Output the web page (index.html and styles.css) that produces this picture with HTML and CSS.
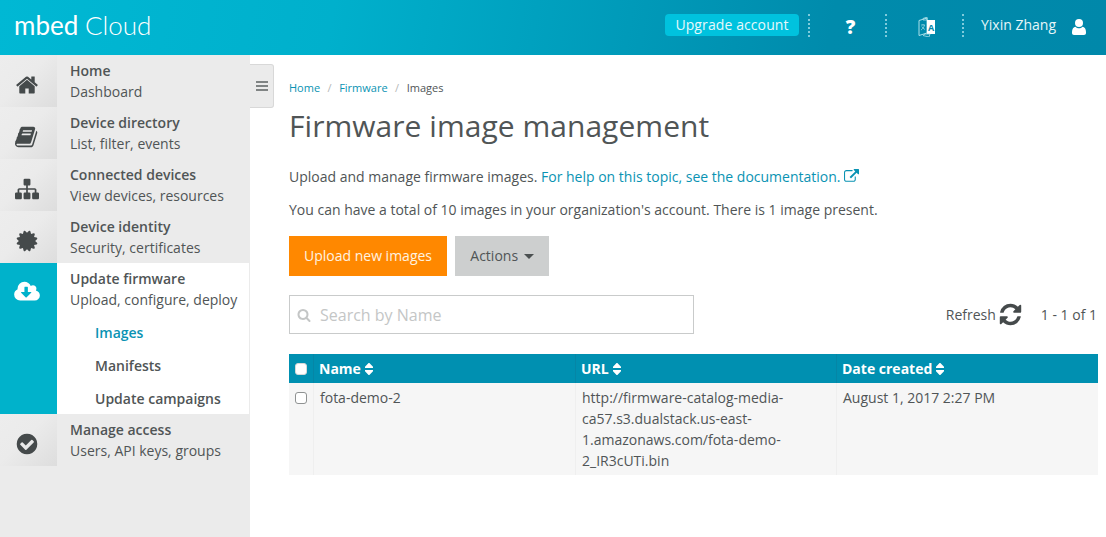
FILE: index.html
```html
<!DOCTYPE html>
<html lang="en">
<head>
<meta charset="utf-8">
<title>Firmware image management</title>
<link rel="stylesheet" href="styles.css">
</head>
<body>
<header class="topbar">
  <div class="logo"><span class="logo-a">mbed</span> <span class="logo-b">Cloud</span></div>
  <div class="top-right">
    <a class="upgrade">Upgrade account</a>
    <div class="top-cell cell-help"><span class="help">?</span></div>
    <div class="top-cell cell-lang">
      <svg class="lang" viewBox="0 0 18 20" width="18" height="20"><path d="M1 3.500 9 1v15l-8 2.500z" fill="none" stroke="#a9dfe9" stroke-width="1"/><path d="M9 3h8v14H9z" fill="#fff"/><path d="M5 1.500 9 0v3H5zM5 18.500l6 1.500 1-3H7z" fill="none" stroke="#a9dfe9" stroke-width=".8"/><text x="13" y="14" class="lang-a">A</text><path d="M3 8h4M5 7v1M6.500 8c-.5 2.500-2 4-3.500 5M3.800 9.500c.6 1.500 2 2.500 3.200 3" fill="none" stroke="#a9dfe9" stroke-width=".7"/></svg>
    </div>
    <div class="top-cell cell-user">
      <span class="user-name">Yixin Zhang</span>
      <svg class="user-icon" viewBox="0 0 14 17" width="14" height="18"><circle cx="7" cy="4.600" r="4" fill="#fff"/><path d="M0 13.500C0 10.500 1.500 8.500 3.500 8.300 4.500 9.300 5.700 9.800 7 9.800s2.500-.5 3.500-1.500c2 .2 3.500 2.200 3.500 5.200v1c0 1.200-.8 2-2 2H2c-1.200 0-2-.8-2-2z" fill="#fff"/></svg>
    </div>
  </div>
</header>
<div class="shell">
  <nav class="sidebar">
    <a class="nav-item">
      <span class="nav-icon"><svg viewBox="0 0 1792 1792" width="24" height="24"><path d="M1472 992v480q0 26-19 45t-45 19h-384v-384h-256v384h-384q-26 0-45-19t-19-45v-480q0-1 .5-3t.5-3l575-474 575 474q1 2 1 6zm223-69l-62 74q-8 9-21 11h-3q-13 0-21-7l-692-577-692 577q-12 8-24 7-13-2-21-11l-62-74q-8-10-7-23.5t11-21.5l719-599q32-26 76-26t76 26l244 204v-195q0-14 9-23t23-9h192q14 0 23 9t9 23v408l219 182q10 8 11 21.5t-7 23.5z"/></svg></span>
      <span class="nav-text"><b>Home</b><span>Dashboard</span></span>
    </a>
    <a class="nav-item">
      <span class="nav-icon"><svg viewBox="0 0 1792 1792" width="24" height="24"><path d="M1639 478q40 57 18 129l-275 906q-19 64-76.5 107.5t-122.5 43.5h-923q-77 0-148.5-53.5t-99.5-131.5q-24-67-2-127 0-4 3-27t4-37q1-8-3-21.5t-3-19.5q2-11 8-21t16.5-23.5 16.5-23.5q23-38 45-91.5t30-91.5q3-10 .5-30t-.5-28q3-11 17-28t17-23q21-36 42-92t25-90q1-9-2.5-32t.5-28q4-13 22-30.5t22-22.5q19-26 42.5-84.5t27.5-96.5q1-8-3-25.5t-2-26.5q2-8 9-18t18-23 17-21q8-12 16.5-30.5t15-35 16-36 19.5-32 26.5-23.5 36-11.5 47.5 5.5l-1 3q38-9 51-9h761q74 0 114 56t18 130l-274 906q-36 119-71.5 153.5t-128.5 34.5h-869q-27 0-38 15-11 16-1 43 24 70 144 70h923q29 0 56-15.5t35-41.5l300-987q7-22 5-57 38 15 59 43zm-1064 2q-4 13 2 22.5t20 9.5h608q13 0 25.5-9.5t16.5-22.5l21-64q4-13-2-22.5t-20-9.5h-608q-13 0-25.5 9.5t-16.5 22.5zm-83 256q-4 13 2 22.5t20 9.5h608q13 0 25.5-9.5t16.5-22.5l21-64q4-13-2-22.5t-20-9.5h-608q-13 0-25.5 9.5t-16.5 22.5z"/></svg></span>
      <span class="nav-text"><b>Device directory</b><span>List, filter, events</span></span>
    </a>
    <a class="nav-item">
      <span class="nav-icon"><svg viewBox="0 0 1792 1792" width="24" height="24"><path d="M1792 1248v320q0 40-28 68t-68 28h-320q-40 0-68-28t-28-68v-320q0-40 28-68t68-28h96v-192h-512v192h96q40 0 68 28t28 68v320q0 40-28 68t-68 28h-320q-40 0-68-28t-28-68v-320q0-40 28-68t68-28h96v-192h-512v192h96q40 0 68 28t28 68v320q0 40-28 68t-68 28h-320q-40 0-68-28t-28-68v-320q0-40 28-68t68-28h96v-192q0-52 38-90t90-38h512v-192h-96q-40 0-68-28t-28-68v-320q0-40 28-68t68-28h320q40 0 68 28t28 68v320q0 40-28 68t-68 28h-96v192h512q52 0 90 38t38 90v192h96q40 0 68 28t28 68z"/></svg></span>
      <span class="nav-text"><b>Connected devices</b><span>View devices, resources</span></span>
    </a>
    <a class="nav-item">
      <span class="nav-icon"><svg viewBox="0 0 1792 1792" width="24" height="24"><path d="M1504 896l138 135q30 28 20 70-12 41-52 51l-188 48 53 186q12 41-19 70-29 31-70 19l-186-53-48 188q-10 40-51 52-12 2-19 2-31 0-51-22l-135-138-135 138q-28 30-70 20-41-11-51-52l-48-188-186 53q-41 12-70-19-31-29-19-70l53-186-188-48q-40-10-52-51-10-42 20-70l138-135-138-135q-30-28-20-70 12-41 52-51l188-48-53-186q-12-41 19-70 29-31 70-19l186 53 48-188q10-41 51-51 41-12 70 19l135 139 135-139q29-30 70-19 41 10 51 51l48 188 186-53q41-12 70 19 31 29 19 70l-53 186 188 48q40 10 52 51 10 42-20 70z"/></svg></span>
      <span class="nav-text"><b>Device identity</b><span>Security, certificates</span></span>
    </a>
    <div class="nav-group">
      <span class="nav-icon active-icon"><svg viewBox="0 0 1920 1792" width="26" height="24"><path d="M1280 928q0-14-9-23t-23-9h-224v-352q0-13-9.500-22.500t-22.500-9.500h-192q-13 0-22.500 9.500t-9.500 22.500v352h-224q-13 0-22.500 9.500t-9.500 22.500q0 14 9 23l352 352q9 9 23 9t23-9l351-351q10-12 10-24zm640 224q0 159-112.500 271.500t-271.500 112.500h-1088q-185 0-316.500-131.500t-131.500-316.500q0-130 70-240t188-165q-2-30-2-43 0-212 150-362t362-150q156 0 285.500 87t188.500 231q71-62 166-62 106 0 181 75t75 181q0 76-41 138 130 31 213.500 135.500t83.500 238.500z"/></svg></span>
      <div class="group-body">
        <span class="nav-text"><b>Update firmware</b><span>Upload, configure, deploy</span></span>
        <ul class="subnav">
          <li class="current">Images</li>
          <li>Manifests</li>
          <li>Update campaigns</li>
        </ul>
      </div>
    </div>
    <a class="nav-item">
      <span class="nav-icon"><svg viewBox="0 0 1792 1792" width="24" height="24"><path d="M1412 734q0-28-18-46l-91-90q-19-19-45-19t-45 19l-408 407-226-226q-19-19-45-19t-45 19l-91 90q-18 18-18 46 0 27 18 45l362 362q19 19 45 19 27 0 46-19l543-543q18-18 18-45zm252 162q0 209-103 385.500t-279.500 279.500-385.500 103-385.500-103-279.500-279.500-103-385.500 103-385.500 279.500-279.500 385.500-103 385.500 103 279.500 279.500 103 385.500z"/></svg></span>
      <span class="nav-text"><b>Manage access</b><span>Users, API keys, groups</span></span>
    </a>
  </nav>
  <button class="toggle" aria-label="Toggle menu"><i></i><i></i><i></i></button>
  <main class="content">
    <ol class="crumbs">
      <li><a>Home</a></li><li class="sep">/</li><li><a>Firmware</a></li><li class="sep">/</li><li>Images</li>
    </ol>
    <h1>Firmware image management</h1>
    <p class="intro">Upload and manage firmware images. <a>For help on this topic, see the documentation.</a> <svg class="ext" viewBox="0 0 1792 1792" width="15" height="15"><path d="M1408 928v320q0 119-84.500 203.500t-203.500 84.500h-832q-119 0-203.500-84.500t-84.500-203.500v-832q0-119 84.500-203.500t203.500-84.500h704q14 0 23 9t9 23v64q0 14-9 23t-23 9h-704q-66 0-113 47t-47 113v832q0 66 47 113t113 47h832q66 0 113-47t47-113v-320q0-14 9-23t23-9h64q14 0 23 9t9 23zm384-864v512q0 26-19 45t-45 19-45-19l-176-176-652 652q-10 10-23 10t-23-10l-114-114q-10-10-10-23t10-23l652-652-176-176q-19-19-19-45t19-45 45-19h512q26 0 45 19t19 45z"/></svg></p>
    <p class="quota">You can have a total of 10 images in your organization's account. There is 1 image present.</p>
    <div class="actions">
      <button class="btn btn-primary"><span class="btn-label">Upload new images</span></button>
      <button class="btn btn-muted"><span class="btn-label">Actions <span class="caret"></span></span></button>
    </div>
    <div class="toolbar">
      <div class="search">
        <svg viewBox="0 0 1792 1792" width="14" height="14"><path d="M1216 832q0-185-131.500-316.500t-316.500-131.500-316.500 131.500-131.500 316.500 131.500 316.500 316.500 131.500 316.500-131.500 131.500-316.500zm512 832q0 52-38 90t-90 38q-54 0-90-38l-343-342q-179 124-399 124-143 0-273.500-55.500t-225-150-150-225-55.500-273.500 55.500-273.500 150-225 225-150 273.500-55.500 273.500 55.500 225 150 150 225 55.500 273.500q0 220-124 399l343 343q37 37 37 90z"/></svg>
        <span class="search-label">Search by Name</span>
      </div>
      <div class="pager">
        <span class="refresh">Refresh <svg viewBox="0 0 1792 1792" width="25" height="25"><path d="M1639 1056q0 5-1 7-64 268-268 434.500t-478 166.500q-146 0-282.500-55t-243.500-157l-129 129q-19 19-45 19t-45-19-19-45v-448q0-26 19-45t45-19h448q26 0 45 19t19 45-19 45l-137 137q71 66 161 102t187 36q134 0 250-65t186-179q11-17 53-117 8-23 30-23h192q13 0 22.500 9.500t9.500 22.500zm25-800v448q0 26-19 45t-45 19h-448q-26 0-45-19t-19-45 19-45l138-138q-148-137-349-137-134 0-250 65t-186 179q-11 17-53 117-8 23-30 23h-199q-13 0-22.500-9.500t-9.500-22.500v-7q65-268 270-434.500t480-166.500q146 0 284 55.500t245 156.500l130-129q19-19 45-19t45 19 19 45z"/></svg></span>
        <span class="count">1 - 1 of 1</span>
      </div>
    </div>
    <div class="table">
      <div class="thead">
        <div class="cell cell-check"><span class="box box-head"></span></div>
        <div class="cell">Name <svg class="sort" viewBox="450 200 900 1392" width="8" height="12"><path d="M1408 1088q0 26-19 45l-448 448q-19 19-45 19t-45-19l-448-448q-19-19-19-45t19-45 45-19h896q26 0 45 19t19 45zm0-384q0 26-19 45t-45 19h-896q-26 0-45-19t-19-45 19-45l448-448q19-19 45-19t45 19l448 448q19 19 19 45z"/></svg></div>
        <div class="cell">URL <svg class="sort" viewBox="450 200 900 1392" width="8" height="12"><path d="M1408 1088q0 26-19 45l-448 448q-19 19-45 19t-45-19l-448-448q-19-19-19-45t19-45 45-19h896q26 0 45 19t19 45zm0-384q0 26-19 45t-45 19h-896q-26 0-45-19t-19-45 19-45l448-448q19-19 45-19t45 19l448 448q19 19 19 45z"/></svg></div>
        <div class="cell">Date created <svg class="sort" viewBox="450 200 900 1392" width="8" height="12"><path d="M1408 1088q0 26-19 45l-448 448q-19 19-45 19t-45-19l-448-448q-19-19-19-45t19-45 45-19h896q26 0 45 19t19 45zm0-384q0 26-19 45t-45 19h-896q-26 0-45-19t-19-45 19-45l448-448q19-19 45-19t45 19l448 448q19 19 19 45z"/></svg></div>
      </div>
      <div class="trow">
        <div class="cell cell-check"><span class="box"></span></div>
        <div class="cell">fota-demo-2</div>
        <div class="cell">http://firmware-catalog-media-ca57.s3.dualstack.us-east-1.amazonaws.com/fota-demo-2_IR3cUTi.bin</div>
        <div class="cell">August 1, 2017 2:27 PM</div>
      </div>
    </div>
  </main>
</div>
</body>
</html>
```
FILE: styles.css
```css
* { box-sizing: border-box; }
html, body { margin: 0; height: 537px; overflow: hidden; background: #fff; }
body { font-family: "Open Sans", sans-serif; font-size: 14px; line-height: 21px; color: #505556; }
a { color: #0a93b3; text-decoration: none; }
svg { display: block; fill: currentColor; }

.topbar { height: 55px; display: flex; align-items: flex-start; justify-content: space-between; color: #fff; background: linear-gradient(100deg, #00b8d4 0%, #00b0cc 30%, #008bac 75%, #0088aa 100%); }
.logo { padding: 9px 0 0 14px; font-family: Lato, sans-serif; font-size: 26px; line-height: 32px; white-space: pre; }
.logo-a { font-weight: 400; }
.logo-b { font-weight: 300; }
.top-right { display: flex; align-items: flex-start; height: 23px; margin-top: 14px; }
.upgrade { display: block; width: 134px; height: 22px; line-height: 22px; margin-right: 9px; text-align: center; color: #e6f8fb; background: #00c2de; border-radius: 4px; letter-spacing: .1px; }
.top-cell { height: 23px; border-left: 2px dotted #7fcbdc; display: flex; align-items: center; }
.cell-help { width: 77px; justify-content: center; padding-left: 6px; }
.help { font-size: 19px; font-weight: 800; margin-top: 3px; }
.cell-lang { width: 77px; padding-left: 31px; }
.cell-user { width: 144px; padding-left: 17px; }
.lang { flex: none; margin-top: 3px; }
.lang-a { font: 700 9px "Open Sans", sans-serif; fill: #0088aa; text-anchor: middle; }
.user-name { color: #e6f6f9; width: 91px; flex: none; margin-top: -2px; }
.user-icon { flex: none; margin-top: 3px; }

.shell { display: flex; height: 482px; position: relative; }
.sidebar { width: 250px; flex: none; background: #ebebeb; }
.nav-item { display: flex; height: 52px; color: inherit; }
.nav-icon { width: 57px; height: 52px; flex: none; display: flex; align-items: center; justify-content: center; color: #454a4b; background: linear-gradient(135deg, #ededed 0%, #ebebeb 45%, #dddddd 100%); padding: 8px 4px 0 0; }
.nav-text { display: block; padding: 5px 0 0 13px; white-space: nowrap; }
.nav-text b { display: block; font-weight: 600; }
.nav-text span { display: block; }
.nav-group { display: flex; height: 151px; }
.active-icon { height: 100%; align-items: flex-start; padding: 17px 4px 0 0; background: #00b2cb; color: #fff; }
.group-body { width: 192px; background: #fff; }
.subnav { list-style: none; margin: 0; padding: 6px 0 0 38px; font-weight: 600; }
.subnav li { height: 33px; line-height: 33px; }
.subnav .current { color: #0a93b3; }

.toggle { position: absolute; left: 250px; top: 9px; width: 24px; height: 44px; padding: 0 0 0 6px; display: flex; flex-direction: column; justify-content: center; gap: 2px; background: #ebebeb; border: 1px solid #d8d8d8; border-left: 0; border-radius: 0 3px 3px 0; }
.toggle i { display: block; width: 12px; height: 2px; background: #808484; }

.content { flex: 1; min-width: 0; padding: 24px 8px 0 39px; }
.crumbs { list-style: none; display: flex; margin: 0; padding: 0; font-size: 11px; line-height: 18px; }
.crumbs .sep { color: #b5b8b8; padding: 0 7.5px; }
h1 { margin: 9px 0 0; font-size: 30px; line-height: 40px; font-weight: 400; letter-spacing: .04px; }
.intro { margin: 20px 0 0; display: flex; white-space: pre; align-items: center; }
.ext { margin-left: 3px; color: #0a93b3; }
.quota { margin: 12px 0 0; }
.actions { display: flex; gap: 8px; margin-top: 16px; }
.btn { height: 40px; border: 0; padding: 0; font: inherit; }
.btn-label { display: block; margin-top: -2px; }
.btn-primary { width: 158px; background: #ff8800; color: #fff3e0; }
.btn-muted { width: 94px; background: #cdcfcf; color: #505556; }
.caret { display: inline-block; width: 0; height: 0; margin-left: 2px; vertical-align: middle; border: 5px solid transparent; border-top-color: #4b5051; border-bottom: 0; }
.toolbar { display: flex; align-items: center; justify-content: space-between; margin-top: 19px; }
.search { width: 405px; height: 39px; display: flex; align-items: center; gap: 9px; padding-left: 7px; border: 1px solid #c9cbcb; color: #c4c6c6; font-size: 16px; }
.search-label { margin-top: 2px; }
.pager { display: flex; align-items: center; margin-right: 1px; }
.refresh { display: flex; align-items: center; gap: 2px; }
.refresh svg { color: #454a4b; }
.count { margin-left: 18px; }

.table { margin-top: 20px; width: 809px; }
.thead, .trow { display: grid; grid-template-columns: 24px 262px 261px 262px; }
.thead { background: #0090b1; color: #fff; font-weight: 700; height: 29px; line-height: 29px; }
.thead .cell { padding-left: 5px; display: flex; align-items: center; gap: 4px; border-left: 1px solid #0586a6; }
.thead .cell-check { border-left: 0; padding-left: 6px; }
.trow { background: #f6f6f6; height: 92px; }
.trow .cell { padding: 4px 16px 0 6px; border-left: 1px solid #efefef; }
.trow .cell-check { border-left: 0; padding: 9px 0 0 6px; }
.box { display: block; width: 12px; height: 12px; border: 1px solid #8f9292; border-radius: 3px; background: #fff; }
.box-head { border-color: #d8d8d8; }
```
